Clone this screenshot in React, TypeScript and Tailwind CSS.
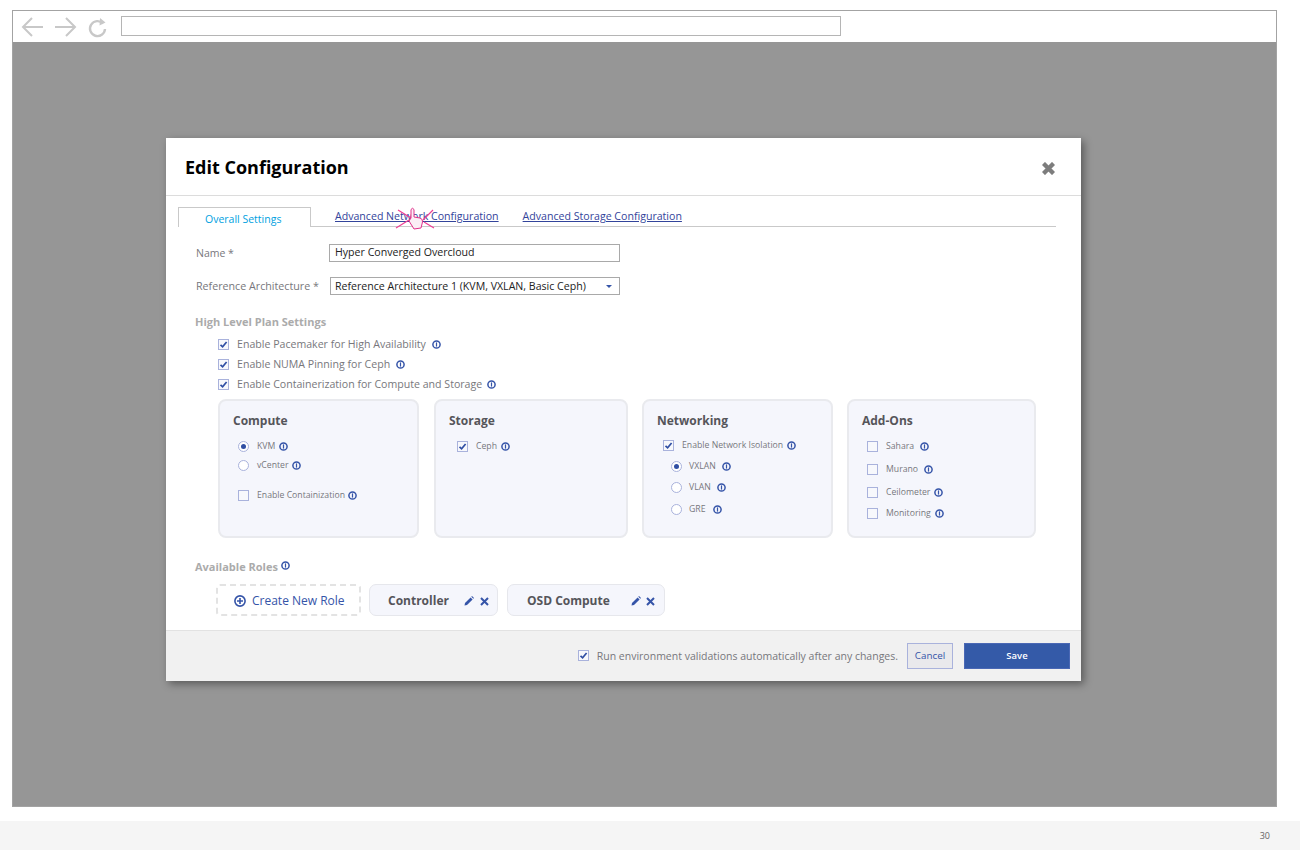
import React from "react";

const Info = ({ className = "" }: { className?: string }) => (
  <svg viewBox="0 0 9 9" className={`w-[9px] h-[9px] shrink-0 ${className}`}>
    <circle cx="4.5" cy="4.5" r="3.6" fill="none" stroke="#3554a8" strokeWidth="1.5" />
    <rect x="3.9" y="2.4" width="1.2" height="4.2" fill="#3554a8" />
  </svg>
);

const Check = ({ checked = false, className = "" }: { checked?: boolean; className?: string }) => (
  <span className={`w-[11px] h-[11px] shrink-0 border border-[#a9b2dc] bg-[#f7f8fc] flex items-center justify-center ${className}`}>
    {checked && (
      <svg viewBox="0 0 9 9" className="w-[9px] h-[9px]">
        <path d="M1.5 4.8 L3.6 6.8 L7.6 2" fill="none" stroke="#2f4ea3" strokeWidth="1.7" />
      </svg>
    )}
  </span>
);

const Radio = ({ checked = false }: { checked?: boolean }) => (
  <span className="w-[11px] h-[11px] shrink-0 rounded-full border border-[#a9b2dc] bg-white flex items-center justify-center">
    {checked && <span className="w-[5px] h-[5px] rounded-full bg-[#2f4ea3]" />}
  </span>
);

const Row = ({ children, className = "" }: { children: React.ReactNode; className?: string }) => (
  <div className={`flex items-center text-[#77777c] ${className}`}>{children}</div>
);

const SmallRow = ({ children, className = "" }: { children: React.ReactNode; className?: string }) => (
  <Row className={`text-[8.7px] leading-[12px] ${className}`}>{children}</Row>
);

const Card = ({ title, className, children }: { title: string; className: string; children: React.ReactNode }) => (
  <div className={`h-[139px] rounded-[8px] border-2 border-[#e9eaee] bg-[#f5f6fc] ${className}`}>
    <div className="mt-[12px] ml-[13px] text-[12px] leading-[16px] font-bold text-[#55555a]">{title}</div>
    {children}
  </div>
);

const Pencil = () => (
  <svg viewBox="0 0 10 10" className="w-[10px] h-[10px]">
    <path d="M0.5 9.5 L1 7 L6.6 1.4 L8.6 3.4 L3 9 Z M7.3 0.7 L8 0 L10 2 L9.3 2.7 Z" fill="#3554a8" />
  </svg>
);

const Cross = ({ color = "#3554a8", size = "w-[9px] h-[9px]", width = 2 }: { color?: string; size?: string; width?: number }) => (
  <svg viewBox="0 0 9 9" className={size}>
    <path d="M1 1 L8 8 M8 1 L1 8" stroke={color} strokeWidth={width} fill="none" />
  </svg>
);

const Role = ({ name, className }: { name: string; className: string }) => (
  <div className={`h-[32px] pt-[1px] rounded-[7px] border border-[#e6e7ec] bg-[#f5f6fc] flex items-center text-[12px] font-bold text-[#55555a] ${className}`}>
    {name}
  </div>
);

export default function App() {
  return (
    <div className="w-[1300px] h-[850px] bg-white overflow-hidden flex flex-col font-['Open_Sans',sans-serif]">
      <div className="mt-[10px] ml-[12px] w-[1265px] h-[797px] border border-[#a3a3a3] flex flex-col">
        {/* browser toolbar */}
        <div className="h-[31px] bg-white flex items-center shrink-0">
          <svg viewBox="0 0 90 24" className="w-[90px] h-[24px] ml-[8px]" fill="none" stroke="#c8c8c8" strokeWidth="2">
            <path d="M22 12 H2 M11 3 L2 12 L11 21" />
            <path d="M34 12 H54 M45 3 L54 12 L45 21" />
            <path d="M82 8.5 A7.5 7.5 0 1 0 84 14" strokeWidth="2.4" />
            <path d="M79 3 L84.5 7.5 L78.5 10.5 Z" fill="#c8c8c8" stroke="none" />
          </svg>
          <div className="ml-[10px] -mt-[2px] w-[720px] h-[20px] border border-[#b5b5b5] bg-white" />
        </div>

        {/* dimmed page */}
        <div className="flex-1 bg-[#969696] pt-[96px] pl-[153px]">
          <div className="relative w-[915px] h-[543px] bg-white flex flex-col shadow-[3px_3px_8px_rgba(0,0,0,0.4)]">
            <div className="h-[58px] shrink-0 border-b border-[#dcdcdc] flex items-center justify-between pl-[19px] pr-[26px]">
              <h1 className="text-[18px] font-bold text-black leading-[24px] mt-[1px]">Edit Configuration</h1>
              <span className="mt-[4px]"><Cross color="#7d7d7d" size="w-[13px] h-[13px] block" width={3} /></span>
            </div>

            <div className="flex-1">
              {/* tabs */}
              <div className="mt-[11px] ml-[12px] mr-[25px] h-[20px] border-b border-[#c9c9c9] flex">
                <div className="w-[133px] h-[20px] border border-b-0 border-[#c9c9c9] bg-white text-[10.5px] leading-[22px] text-[#009fdf] pl-[26px]">
                  Overall Settings
                </div>
                <a className="ml-[24px] text-[10.6px] leading-[19px] underline text-[#33449b]">Advanced Network Configuration</a>
                <a className="ml-[24px] text-[10.6px] leading-[19px] underline text-[#33449b]">Advanced Storage Configuration</a>
              </div>

              {/* form */}
              <div className="mt-[17px] ml-[30px] flex items-center">
                <label className="w-[133px] pt-[1px] text-[10.5px] text-[#77777c]">Name *</label>
                <div className="w-[291px] h-[18px] border border-[#a9a9a9] pl-[5px] text-[10.6px] leading-[15px] text-[#222]">Hyper Converged Overcloud</div>
              </div>
              <div className="mt-[15px] ml-[30px] flex items-center">
                <label className="w-[134px] pt-[1px] text-[10.7px] text-[#77777c]">Reference Architecture *</label>
                <div className="w-[290px] h-[18px] border border-[#a9a9a9] pl-[4px] pr-[7px] text-[10.6px] leading-[15px] text-[#222] flex items-center justify-between">
                  Reference Architecture 1 (KVM, VXLAN, Basic Ceph)
                  <span className="w-0 h-0 border-x-[3px] border-x-transparent border-t-[3px] border-t-[#3554a8]" />
                </div>
              </div>

              <div className="mt-[20px] ml-[29px] text-[11px] leading-[14px] font-bold text-[#ababab]">High Level Plan Settings</div>

              <div className="mt-[5px] ml-[52px]">
                <Row className="h-[20px] text-[10.6px]"><Check checked /><span className="ml-[8px] mt-[1px]">Enable Pacemaker for High Availability</span><Info className="ml-[6px]" /></Row>
                <Row className="h-[20px] text-[10.6px]"><Check checked /><span className="ml-[8px] mt-[1px]">Enable NUMA Pinning for Ceph</span><Info className="ml-[6px]" /></Row>
                <Row className="h-[20px] text-[10.6px]"><Check checked /><span className="ml-[8px] mt-[1px]">Enable Containerization for Compute and Storage</span><Info className="ml-[5px]" /></Row>
              </div>

              {/* option cards */}
              <div className="mt-[5px] ml-[52px] flex">
                <Card title="Compute" className="w-[201px]">
                  <SmallRow className="mt-[11px] ml-[18px]"><Radio checked /><span className="ml-[8px]">KVM</span><Info className="ml-[4px]" /></SmallRow>
                  <SmallRow className="mt-[7px] ml-[18px]"><Radio /><span className="ml-[8px]">vCenter</span><Info className="ml-[3px]" /></SmallRow>
                  <SmallRow className="mt-[18px] ml-[18px]"><Check /><span className="ml-[8px]">Enable Containization</span><Info className="ml-[3px]" /></SmallRow>
                </Card>
                <Card title="Storage" className="w-[194px] ml-[15px]">
                  <SmallRow className="mt-[11px] ml-[21px]"><Check checked /><span className="ml-[8px]">Ceph</span><Info className="ml-[4px]" /></SmallRow>
                </Card>
                <Card title="Networking" className="w-[191px] ml-[14px]">
                  <SmallRow className="mt-[10px] ml-[19px]"><Check checked /><span className="ml-[8px]">Enable Network Isolation</span><Info className="ml-[4px]" /></SmallRow>
                  <SmallRow className="mt-[9px] ml-[27px]"><Radio checked /><span className="ml-[7px]">VXLAN</span><Info className="ml-[6px]" /></SmallRow>
                  <SmallRow className="mt-[9px] ml-[27px]"><Radio /><span className="ml-[7px]">VLAN</span><Info className="ml-[6px]" /></SmallRow>
                  <SmallRow className="mt-[10px] ml-[27px]"><Radio /><span className="ml-[7px]">GRE</span><Info className="ml-[7px]" /></SmallRow>
                </Card>
                <Card title="Add-Ons" className="w-[189px] ml-[14px]">
                  <SmallRow className="mt-[11px] ml-[18px]"><Check /><span className="ml-[8px]">Sahara</span><Info className="ml-[6px]" /></SmallRow>
                  <SmallRow className="mt-[11px] ml-[18px]"><Check /><span className="ml-[8px]">Murano</span><Info className="ml-[6px]" /></SmallRow>
                  <SmallRow className="mt-[11px] ml-[18px]"><Check /><span className="ml-[8px]">Ceilometer</span><Info className="ml-[4px]" /></SmallRow>
                  <SmallRow className="mt-[9px] ml-[18px]"><Check /><span className="ml-[8px]">Monitoring</span><Info className="ml-[4px]" /></SmallRow>
                </Card>
              </div>

              <div className="mt-[22px] ml-[29px] flex items-center text-[11px] leading-[14px] font-bold text-[#ababab]">
                Available Roles<Info className="ml-[3px] -mt-[3px]" />
              </div>

              {/* roles */}
              <div className="mt-[10px] ml-[50px] flex">
                <div className="w-[145px] h-[32px] pt-[1px] rounded-[4px] border-2 border-dashed border-[#e3e3e3] flex items-center pl-[16px] text-[12px] text-[#3554a8]">
                  <svg viewBox="0 0 12 12" className="w-[12px] h-[12px] mr-[6px]">
                    <circle cx="6" cy="6" r="5.1" fill="none" stroke="#3554a8" strokeWidth="1.6" />
                    <path d="M6 3 V9 M3 6 H9" stroke="#3554a8" strokeWidth="1.6" />
                  </svg>
                  Create New Role
                </div>
                <Role name="Controller" className="w-[129px] ml-[8px] pl-[18px]" />
                <Role name="OSD Compute" className="w-[158px] ml-[9px] pl-[19px]" />
              </div>
            </div>

            {/* footer */}
            <div className="h-[51px] shrink-0 border-t border-[#e2e2e2] bg-[#f1f1f1] flex items-center justify-end pr-[11px]">
              <Check checked className="-mt-[1px]" />
              <span className="ml-[8px] mt-[1px] text-[10.5px] text-[#77777c]">Run environment validations automatically after any changes.</span>
              <button className="ml-[9px] w-[46px] h-[26px] pt-[1px] border border-[#a9b2dc] bg-[#e9e9ec] text-[9.8px] text-[#3554a8]">Cancel</button>
              <button className="ml-[11px] w-[106px] h-[26px] pt-[1px] border border-[#4a68b5] bg-[#345aa8] text-[9.5px] font-semibold text-white">Save</button>
            </div>

            {/* role actions */}
            <div className="absolute left-[298px] top-[458px] flex items-center gap-[6px]"><Pencil /><Cross /></div>
            <div className="absolute left-[465px] top-[458px] flex items-center gap-[5px]"><Pencil /><Cross /></div>

            {/* click cursor */}
            <svg viewBox="0 0 40 28" className="absolute left-[229px] top-[67px] w-[40px] h-[28px]">
              <path d="M1 23 L14 15 M3 5 L16 13 M38 5 L28 15 M39 23 L29 17" stroke="#ee3f94" strokeWidth="1.2" fill="none" />
              <path d="M16 13 L16 4.5 Q17.5 2 19 4.5 L19 12 L25 13 Q28 14 27.5 17 L26 23 L19 24 L14 16 Z" fill="#fbeef5" stroke="#e0308a" strokeWidth="1" />
            </svg>
          </div>
        </div>
      </div>

      <div className="mt-[14px] h-[29px] bg-[#f5f5f5] flex items-center justify-end pr-[30px] text-[9px] text-[#666]">30</div>
    </div>
  );
}
